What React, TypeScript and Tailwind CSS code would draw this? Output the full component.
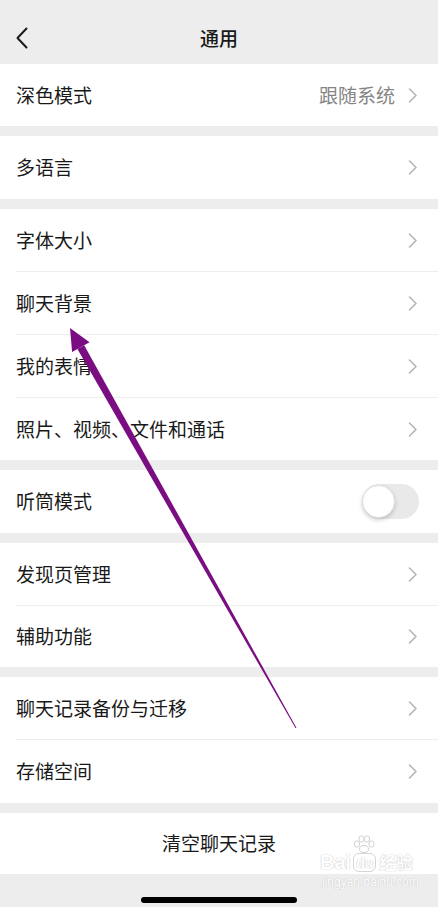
import React from "react";

const FONT = { fontFamily: '"Noto Sans CJK SC", "Noto Sans", sans-serif' };

function Chevron() {
  return (
    <svg width="10" height="15" viewBox="0 0 10 15" className="shrink-0">
      <path d="M1.5 1 L8 7.5 L1.5 14" fill="none" stroke="#b5b5b5" strokeWidth="1.6" strokeLinecap="round" strokeLinejoin="round" />
    </svg>
  );
}

function Row({ label, value, h = "h-[62px]", chevron = true }: { label: string; value?: string; h?: string; chevron?: boolean }) {
  return (
    <div className={`flex items-center bg-white pl-[16px] pr-[20px] ${h}`}>
      <span className="flex-1 text-[19px] text-[#191919] leading-none mb-[2px]">{label}</span>
      {value && <span className="mr-[13px] text-[19px] text-[#858585] leading-none mb-[2px]">{value}</span>}
      {chevron && <Chevron />}
    </div>
  );
}

function Sep() {
  return (
    <div className="h-px bg-white pl-[16px]">
      <div className="h-px bg-[#eeeeee]" />
    </div>
  );
}

function Gap() {
  return <div className="h-[10px] bg-[#ededed]" />;
}

export default function App() {
  return (
    <div className="relative w-[438px] h-[907px] overflow-hidden bg-[#ededed]" style={FONT}>
      <div className="relative flex h-[64px] items-center justify-center bg-[#ededed]">
        <svg width="14" height="22" viewBox="0 0 14 22" className="absolute left-[15px] top-[27px]">
          <path d="M11.5 1.5 L2.5 11 L11.5 20.5" fill="none" stroke="#1a1a1a" strokeWidth="2" strokeLinecap="round" strokeLinejoin="round" />
        </svg>
        <span className="text-[19px] font-medium text-[#191919] leading-none mt-[10px]">通用</span>
      </div>

      <Row label="深色模式" value="跟随系统" />
      <Gap />
      <Row label="多语言" h="h-[63px]" />
      <Gap />
      <Row label="字体大小" />
      <Sep />
      <Row label="聊天背景" />
      <Sep />
      <Row label="我的表情" />
      <Sep />
      <Row label="照片、视频、文件和通话" />
      <Gap />
      <div className="flex h-[63px] items-center bg-white pl-[16px] pr-[19px]">
        <span className="flex-1 text-[19px] text-[#191919] leading-none mb-[2px]">听筒模式</span>
        <div className="relative h-[35px] w-[57px] rounded-full bg-[#e9e9e9]">
          <div className="absolute left-0 top-[1px] h-[33px] w-[33px] rounded-full bg-white border border-[#e2e2e2] shadow-[0_2px_4px_rgba(0,0,0,0.18)]" />
        </div>
      </div>
      <Gap />
      <Row label="发现页管理" />
      <Sep />
      <Row label="辅助功能" h="h-[61px]" />
      <Gap />
      <Row label="聊天记录备份与迁移" />
      <Sep />
      <Row label="存储空间" h="h-[63px]" />
      <Gap />
      <div className="flex h-[61px] items-center justify-center bg-white">
        <span className="text-[19px] text-[#191919] leading-none mb-[2px]">清空聊天记录</span>
      </div>
      <div className="flex h-[33px] items-end justify-center pb-[4px] bg-[#ededed]">
        <div className="h-[6px] w-[156px] rounded-full bg-black" />
      </div>

      {/* Baidu watermark */}
      <div className="pointer-events-none absolute left-[320px] top-[852px] flex flex-col items-start whitespace-nowrap">
        <div className="flex items-end gap-[2px] leading-none text-white [text-shadow:0_0_1px_#c4c4c4,0_0_1px_#c4c4c4]" style={{ fontFamily: '"Liberation Sans", "Noto Sans CJK SC", sans-serif' }}>
          <span className="text-[20px] font-bold">Bai</span>
          <span className="relative flex h-[19px] items-center rounded-[6px] border border-[#d6d6d6] px-[2px] text-[14px] font-bold">
            du
            <svg width="22" height="18" viewBox="0 0 22 18" className="absolute left-[-1px] top-[-19px]">
              <g fill="white" stroke="#d2d2d2" strokeWidth="1">
                <ellipse cx="4" cy="9" rx="2.6" ry="3.2" />
                <ellipse cx="8.5" cy="4" rx="2.6" ry="3.2" />
                <ellipse cx="14" cy="4" rx="2.6" ry="3.2" />
                <ellipse cx="18.5" cy="9" rx="2.6" ry="3.2" />
                <ellipse cx="11" cy="14" rx="4.5" ry="3.5" />
              </g>
            </svg>
          </span>
          <span className="text-[17px] font-bold ml-[1px]">经验</span>
        </div>
        <div className="mt-[4px] ml-[2px] text-[12px] leading-none text-white [text-shadow:0_0_1px_#c8c8c8,0_0_1px_#c8c8c8]" style={{ fontFamily: '"Liberation Sans", sans-serif' }}>
          jingyan.baidu.com
        </div>
      </div>

      {/* Purple annotation arrow */}
      <svg className="pointer-events-none absolute left-0 top-0" width="438" height="907" viewBox="0 0 438 907">
        <polygon points="70,328 89.5,342.3 72.1,352.1" fill="#7a0d82" />
        <polygon points="84.2,345.3 77.4,349.1 295.6,728.3 296.4,727.8" fill="#7a0d82" />
      </svg>
    </div>
  );
}
